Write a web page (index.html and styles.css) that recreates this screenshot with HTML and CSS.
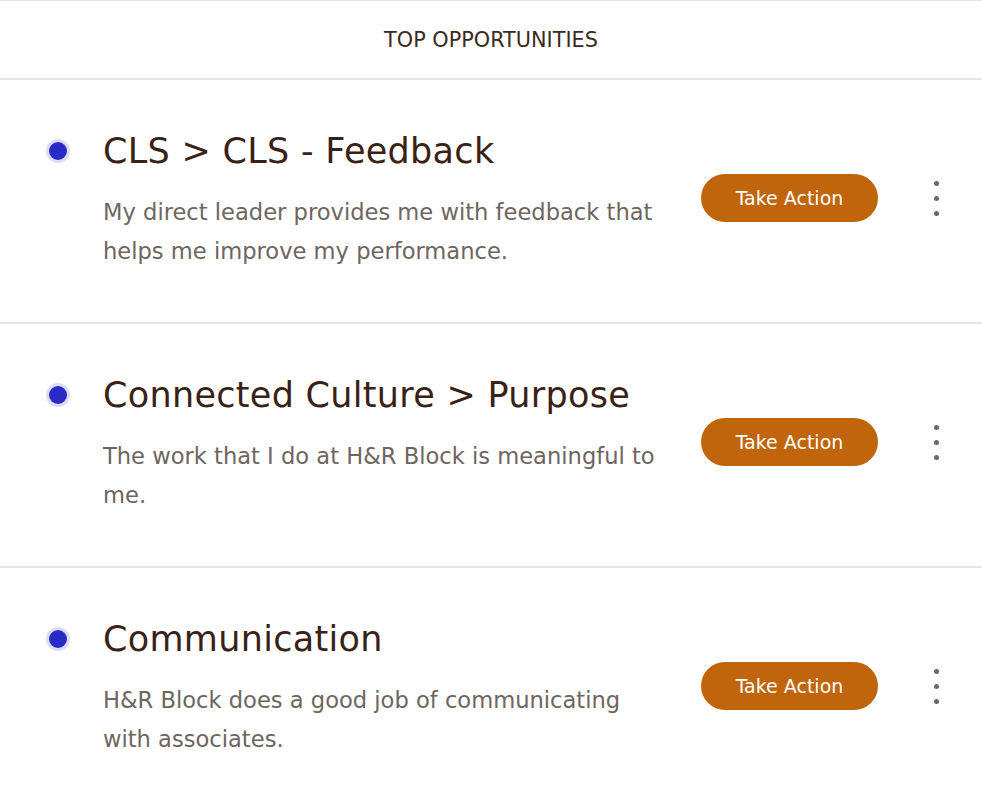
FILE: index.html
```html
<!DOCTYPE html>
<html lang="en">
<head>
<meta charset="utf-8">
<title>Top Opportunities</title>
<link rel="stylesheet" href="styles.css">
</head>
<body>
<section class="panel">
  <header class="panel-header">TOP OPPORTUNITIES</header>
  <div class="row">
    <div class="dot-col"><span class="dot"></span></div>
    <div class="text">
      <h2 class="title">CLS &gt; CLS - Feedback</h2>
      <p class="desc">My direct leader provides me with feedback that helps me improve my performance.</p>
    </div>
    <div class="actions">
      <button class="btn">Take Action</button>
      <span class="kebab"><i></i><i></i><i></i></span>
    </div>
  </div>
  <div class="row">
    <div class="dot-col"><span class="dot"></span></div>
    <div class="text">
      <h2 class="title">Connected Culture &gt; Purpose</h2>
      <p class="desc">The work that I do at H&amp;R Block is meaningful to me.</p>
    </div>
    <div class="actions">
      <button class="btn">Take Action</button>
      <span class="kebab"><i></i><i></i><i></i></span>
    </div>
  </div>
  <div class="row">
    <div class="dot-col"><span class="dot"></span></div>
    <div class="text">
      <h2 class="title">Communication</h2>
      <p class="desc">H&amp;R Block does a good job of communicating with associates.</p>
    </div>
    <div class="actions">
      <button class="btn">Take Action</button>
      <span class="kebab"><i></i><i></i><i></i></span>
    </div>
  </div>
</section>
</body>
</html>
```

FILE: styles.css
```css
html, body {
  margin: 0;
  padding: 0;
  background: #ffffff;
}
body {
  font-family: "DejaVu Sans", "Liberation Sans", sans-serif;
}
.panel {
  border-top: 1px solid #e8e4e1;
}
.panel-header {
  height: 77px;
  display: flex;
  align-items: center;
  justify-content: center;
  font-size: 20.8px;
  color: #3b2a21;
  border-bottom: 2px solid #e8e4e1;
}
.row {
  display: flex;
  align-items: flex-start;
  padding: 51px 0 0 45px;
  height: 244px;
  box-sizing: border-box;
  border-bottom: 2px solid #e8e4e1;
}
.row:last-child {
  border-bottom: none;
}
.dot-col {
  width: 25px;
  height: 40px;
  display: flex;
  align-items: center;
  justify-content: center;
  flex: 0 0 25px;
}
.dot {
  width: 18px;
  height: 18px;
  border-radius: 50%;
  background: #2a2ac6;
  box-shadow: 0 0 0 3px #dddcf4;
}
.text {
  flex: 0 0 562px;
  margin-left: 33px;
}
.title {
  margin: 0;
  font-weight: normal;
  font-size: 35px;
  letter-spacing: 0.3px;
  line-height: 40px;
  color: #3a2116;
}
.desc {
  margin: 22px 0 0;
  font-size: 22.6px;
  line-height: 38.5px;
  color: #6e6560;
}
.actions {
  display: flex;
  align-items: center;
  margin-left: 36px;
  margin-top: 43px;
}
.btn {
  width: 177px;
  height: 48px;
  border: none;
  border-radius: 24px;
  background: #c0650b;
  color: #ffffff;
  font-family: "DejaVu Sans", "Liberation Sans", sans-serif;
  font-size: 19px;
  padding: 0;
}
.kebab {
  display: flex;
  flex-direction: column;
  align-items: center;
  gap: 10px;
  margin-left: 56px;
  width: 5px;
}
.kebab i {
  display: block;
  width: 5px;
  height: 5px;
  border-radius: 50%;
  background: #6e6663;
}
```
